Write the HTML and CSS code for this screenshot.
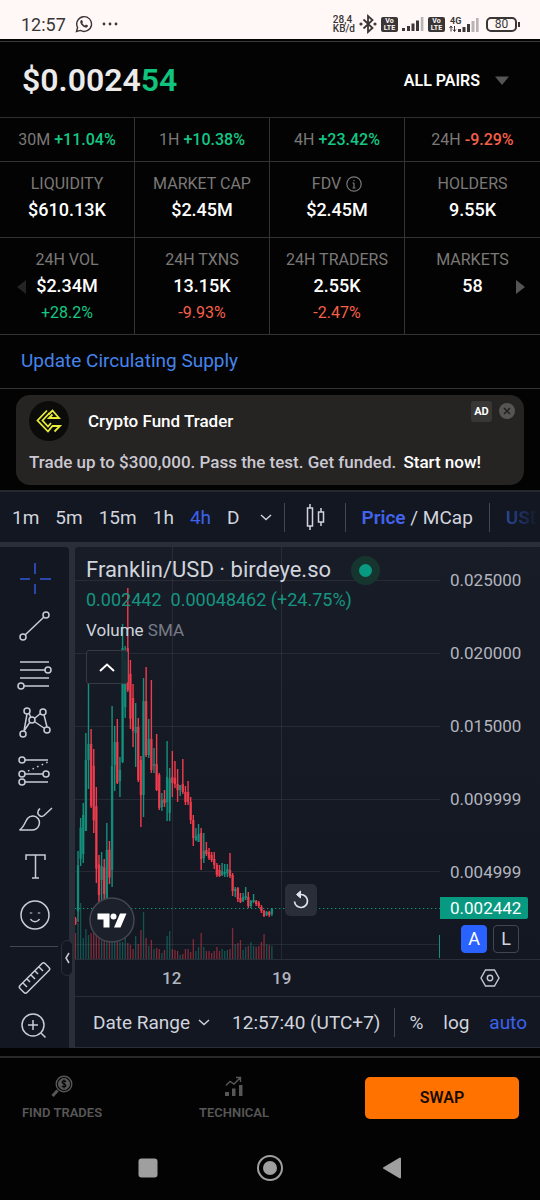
FILE: index.html
```html
<!DOCTYPE html>
<html lang="en">
<head>
<meta charset="utf-8">
<meta name="viewport" content="width=device-width, initial-scale=1">
<title>Franklin / USD</title>
<link rel="stylesheet" href="styles.css">
</head>
<body>
<header class="status">
  <div class="status-left">
    <span class="clock">12:57</span>
    <svg width="18" height="18" viewBox="0 0 18 18" fill="none" stroke="#3b3636" stroke-width="1.4"><path d="M1.5 16.5l1.1-4A7.4 7.4 0 1 1 5.4 15.400z"/><path d="M6 5.200l1-.3 1 2-.7 1c.7 1.400 1.500 2 2.800 2.600l.9-.9 2 1-.2 1c-.5 1-1.600 1.200-2.600.9C7.800 11.700 6 10 5.300 7.600 5.100 6.700 5.400 5.600 6 5.200z" fill="#3b3636" stroke="none"/></svg>
    <svg width="16" height="4" viewBox="0 0 16 4" fill="#3b3636"><circle cx="2" cy="2" r="1.400"/><circle cx="8" cy="2" r="1.400"/><circle cx="14" cy="2" r="1.400"/></svg>
  </div>
  <div class="status-right">
    <span class="tiny">28,4<br>KB/d</span>
    <svg width="18" height="20" viewBox="0 0 18 20" fill="none" stroke="#3b3636" stroke-width="1.800"><path d="M4.500 5.500l9 8.500L9 18V2l4.500 4-9 8.500"/><circle cx="2" cy="10" r=".7"/><circle cx="16" cy="10" r=".7"/></svg>
    <span class="volte">Vo<br>LTE</span>
    <svg width="22" height="16" viewBox="0 0 22 16" fill="#3b3636"><path d="M0 12h3v3H0zM5 10h3v5H5zM9.500 7.500h3V15h-3zM14 4.500h3V15h-3z"/><path d="M18.800 1h2.600v14h-2.600z" fill="#b9b3b3"/></svg>
    <span class="volte">Vo<br>LTE</span>
    <svg width="31" height="17" viewBox="0 0 31 17" fill="#3b3636"><text x="1" y="8" class="net">4G</text><path d="M2 10v5.500M0.500 12l1.500-2 1.500 2M5.500 10v5.500M4 13.500l1.500 2 1.500-2" fill="none" stroke="#3b3636"/><path d="M9 13h3v3H9zM13.500 11h3v5h-3zM18 8h3v8h-3z"/><path d="M22.500 5h3v11h-3zM27 2h2.600v14H27z" fill="#b9b3b3"/></svg>
    <span class="battery">80</span>
  </div>
</header>

<main>
  <section class="price-bar">
    <h1 class="price">$0.0024<span class="up">54</span></h1>
    <button class="pairs">ALL PAIRS <svg width="14" height="9" viewBox="0 0 14 9"><path d="M0 .5h14L7 9z" fill="#555"/></svg></button>
  </section>

  <section class="changes">
    <div>30M <b class="up">+11.04%</b></div>
    <div>1H <b class="up">+10.38%</b></div>
    <div>4H <b class="up">+23.42%</b></div>
    <div>24H <b class="down">-9.29%</b></div>
  </section>
  <section class="stats stats-short">
    <div><span>LIQUIDITY</span><strong>$610.13K</strong></div>
    <div><span>MARKET CAP</span><strong>$2.45M</strong></div>
    <div><span>FDV <svg width="16" height="16" viewBox="0 0 16 16" fill="none" stroke="#7b7977" stroke-width="1.200"><circle cx="8" cy="8" r="7.200"/><path d="M8 7v5M6.500 7H8M6.500 12h3M8 4v1.300"/></svg></span><strong>$2.45M</strong></div>
    <div><span>HOLDERS</span><strong>9.55K</strong></div>
  </section>
  <section class="stats stats-tall">
    <div><span>24H VOL</span><strong>$2.34M</strong><em class="up">+28.2%</em></div>
    <div><span>24H TXNS</span><strong>13.15K</strong><em class="down">-9.93%</em></div>
    <div><span>24H TRADERS</span><strong>2.55K</strong><em class="down">-2.47%</em></div>
    <div><span>MARKETS</span><strong>58</strong></div>
    <button class="page prev" aria-label="Previous"><svg width="9" height="14" viewBox="0 0 9 14"><path d="M9 0v14L0 7z" fill="#242424"/></svg></button>
    <button class="page next" aria-label="Next"><svg width="9" height="14" viewBox="0 0 9 14"><path d="M0 0v14l9-7z" fill="#555"/></svg></button>
  </section>
  <div class="update"><a href="#">Update Circulating Supply</a></div>

  <aside class="ad">
    <div class="ad-top">
      <svg class="ad-logo" width="40" height="40" viewBox="0 0 40 40"><circle cx="20" cy="20" r="20" fill="#0b0b0a"/><g fill="none" stroke="#e9ec36" stroke-width="1.800"><path d="M18 9.500L8.500 19.500 19 30.500l4.500-5.500h7.500l-5.500 5.500"/><path d="M20.500 12L13.500 19.500l5.500 6 3-3.500"/><path d="M19.500 13.500l4-4 6.500 7.500h-10l3.500-3.500"/></g></svg>
      <h2>Crypto Fund Trader</h2>
      <span class="ad-tag">AD</span>
      <button class="ad-close" aria-label="Close"><svg width="16" height="16" viewBox="0 0 16 16"><circle cx="8" cy="8" r="8" fill="#565553"/><path d="M5 5l6 6M11 5l-6 6" stroke="#22201f" stroke-width="1.500"/></svg></button>
    </div>
    <p>Trade up to $300,000. Pass the test. Get funded. <a href="#">Start now!</a></p>
  </aside>

  <section class="tv">
    <nav class="toolbar">
      <button>1m</button><button>5m</button><button>15m</button><button>1h</button><button class="on">4h</button><button>D</button>
      <button class="more" aria-label="More intervals"><svg width="12" height="7" viewBox="0 0 12 7" fill="none" stroke="#d1d4dc" stroke-width="1.400"><path d="M1 1l5 4.500L11 1"/></svg></button>
      <i></i>
      <button class="candle" aria-label="Chart type"><svg width="22" height="28" viewBox="0 0 22 28" fill="none" stroke="#d1d4dc" stroke-width="1.500"><path d="M2.500 5h5v18h-5zM5 1v4M5 23v4M13.500 9h5v10h-5zM16 5v4M16 19v4"/></svg></button>
      <i></i>
      <button class="mode"><b>Price</b> / MCap</button>
      <i></i>
      <button class="usd">USD</button>
    </nav>
    <div class="tv-body">
      <nav class="tools">
        <button aria-label="Cross"><svg class="blue" viewBox="0 0 48 48"><path d="M9 24h10M29 24h11M24 8v11M24 29v10"/></svg></button>
        <button aria-label="Trend line"><svg viewBox="0 0 48 48"><path d="M14 32L33 14"/><circle cx="12" cy="34" r="3"/><circle cx="35" cy="12" r="3"/></svg></button>
        <button aria-label="Fib retracement"><svg viewBox="0 0 48 48"><path d="M9 11h29M9 19h25M9 27h29M13 35h25"/><circle cx="37" cy="19" r="3"/><circle cx="10" cy="35" r="3"/></svg></button>
        <button aria-label="Patterns"><svg viewBox="0 0 48 48"><path d="M16 15l-3 17M18 14l2 5M19 23l-6 9M24 19l6-5M24 23l9 6M33 16l3 12"/><circle cx="16" cy="12" r="3"/><circle cx="32" cy="13" r="3"/><circle cx="21" cy="21" r="3"/><circle cx="12" cy="35" r="3"/><circle cx="36" cy="31" r="3"/></svg></button>
        <button aria-label="Forecasting"><svg viewBox="0 0 48 48"><path d="M14 13h23M14 27h18M14 35h23"/><path d="M17 24l20-9" stroke-dasharray="1.500 3.500"/><circle cx="11" cy="13" r="3"/><circle cx="11" cy="27" r="3"/><circle cx="35" cy="27" r="3"/><circle cx="11" cy="35" r="3"/></svg></button>
        <button aria-label="Brush"><svg viewBox="0 0 48 48"><path d="M8.500 35c4-2 5-7 8-11.500 3-3.500 8-3 10.500 0 3 4 1 11.500-6 11.500zM41 13l-8 7.500c-3 2.500-7-1-6-4 .3-1.500 1-2 2-3"/></svg></button>
        <button aria-label="Text"><svg viewBox="0 0 48 48"><path d="M15 17v-5h19v5M24.500 12v23M21 35h7"/></svg></button>
        <button aria-label="Icons"><svg viewBox="0 0 48 48"><circle cx="24" cy="24" r="14"/><path d="M19.500 28c2 3.500 7 3.500 9 0"/><path d="M20 21.500v1M28 21.500v1" stroke-width="2.500"/></svg></button>
        <hr>
        <button aria-label="Measure"><svg viewBox="0 0 48 48"><path d="M9 31.500L31 9.500q1.500-1.500 3 0l4 4q1.500 1.500 0 3L16 38.500q-1.500 1.500-3 0l-4-4q-1.500-1.500 0-3zM12 29l4 4M16 25l3 3M20 21l4 4M24 17l3 3M28 13l4 4"/></svg></button>
        <button class="zoom" aria-label="Zoom in"><svg viewBox="0 0 48 48"><circle cx="22" cy="24" r="11"/><path d="M30 32l4.500 4.500M17 24h10M22 19v10"/></svg></button>
        <button class="handle" aria-label="Hide toolbar"><svg width="5" height="12" viewBox="0 0 5 12" fill="none" stroke="#d1d4dc" stroke-width="1.300"><path d="M4 1L1 6l3 5"/></svg></button>
      </nav>
      <div class="chart">
        <div class="pane">
          <div class="plot">
            <svg id="canvas" viewBox="75 547 365 412" preserveAspectRatio="none"></svg>
            <div class="legend">
              <h3>Franklin/USD · birdeye.so <span class="dot"></span></h3>
              <p class="ohlc"><span>0.002442</span><span>0.00048462 (+24.75%)</span></p>
              <p class="vol">Volume <span>SMA</span></p>
              <button class="collapse" aria-label="Collapse legend"><svg width="16" height="9" viewBox="0 0 16 9" fill="none" stroke="#fff" stroke-width="2"><path d="M1 8l7-6.500L15 8"/></svg></button>
            </div>
            <svg class="tv-logo" width="46" height="46" viewBox="0 0 46 46"><circle cx="23" cy="23" r="22" fill="#1c202b" stroke="#434651" stroke-width="1.500"/><path d="M8.500 16.500h12v14h-6v-8h-6zM31 16.500h6.500l-6 14H25z" fill="#fff"/><circle cx="24.500" cy="19.500" r="3" fill="#fff"/></svg>
            <button class="reset" aria-label="Reset chart"><svg width="18" height="20" viewBox="0 0 18 20" fill="none" stroke="#e0e3eb" stroke-width="1.700"><path d="M2.500 11.500a6.500 6.500 0 1 0 6.500-7H5.500"/><path d="M8.500 1L4.500 4.500l4 3.500z" fill="#e0e3eb" stroke-width="1"/></svg></button>
          </div>
          <div class="axis">
            <span>0.025000</span><span>0.020000</span><span>0.015000</span><span>0.009999</span><span>0.004999</span>
            <strong>0.002442</strong>
            <div class="scale"><button class="auto-scale">A</button><button>L</button></div>
          </div>
        </div>
        <div class="time"><span>12</span><span>19</span>
          <svg width="20" height="18" viewBox="0 0 20 18" fill="none" stroke="#c4c7d0" stroke-width="1.400"><path d="M5.500 1h9l4.500 8-4.500 8h-9L1 9z"/><circle cx="10" cy="9" r="2.700"/></svg>
        </div>
        <div class="range">
          <button class="date">Date Range <svg width="12" height="7" viewBox="0 0 12 7" fill="none" stroke="#d1d4dc" stroke-width="1.400"><path d="M1 1l5 4.500L11 1"/></svg></button>
          <button class="zone">12:57:40 (UTC+7)</button>
          <i></i>
          <div class="modes"><button>%</button><button>log</button><button class="on">auto</button></div>
        </div>
      </div>
    </div>
  </section>
</main>

<footer class="actions">
  <button class="tab"><svg width="22" height="23" viewBox="0 0 22 23" fill="none" stroke="#575757"><circle cx="13" cy="9" r="7.800" stroke-width="1.400"/><circle cx="13" cy="9" r="5.500" fill="#575757"/><path d="M6.500 15.500L1.500 21" stroke-width="3"/><path d="M15 7c-.5-1.500-4-1.500-4 .3 0 2 4 1.200 4 3.200 0 1.800-3.500 1.800-4.200.2M13 4.500v9" stroke="#050505" stroke-width="1.100"/></svg>FIND TRADES</button>
  <button class="tab tech"><svg width="20" height="23" viewBox="0 0 20 23" fill="#575757"><path d="M1 17h4v4H1zM8 13.500h3.500V21H8zM15 10h3.500v11H15z"/><path d="M2 10.500l4-4 4 2.500 6-6M12 2.500h4.500V7" fill="none" stroke="#575757" stroke-width="1.400"/></svg>TECHNICAL</button>
  <button class="swap">SWAP</button>
</footer>
<nav class="system">
  <button aria-label="Recent apps"><svg width="28" height="28" viewBox="0 0 28 28"><rect x="4.500" y="4.500" width="19" height="19" rx="3" fill="#9f9f9f"/></svg></button>
  <button aria-label="Home"><svg width="28" height="28" viewBox="0 0 28 28"><circle cx="14" cy="14" r="12" fill="none" stroke="#9f9f9f" stroke-width="2"/><circle cx="14" cy="14" r="7" fill="#9f9f9f"/></svg></button>
  <button aria-label="Back"><svg width="28" height="28" viewBox="0 0 28 28"><path d="M22 4.500v19L6 14z" fill="#9f9f9f" stroke="#9f9f9f" stroke-width="2" stroke-linejoin="round"/></svg></button>
</nav>
<script src="chart.js"></script>
</body>
</html>
```
FILE: chart.js
```js
// Each candle: colour, wick top, wick bottom, volume top, optional body top and bottom.
const candles = `
r 917 925 933;g 851 922 923;g 818 866 903;g 803 863 938;g 733 831 929 760 831;g 683 789 935 744 760;r 729 808 933 744 806;r 749 833 913;r 787 883 905;r 855 902 920
g 852 900 925 866 880;r 859 900 930;g 823 900 920 850 900;r 841 884 935;g 706 887 930 766 870;g 726 791 940 742 765;r 719 784 938 742 783;g 757 797 942 770 781;g 624 763 942 648 762;g 646 718 938
r 588 692 943 648 690;r 660 729 945;r 684 747 949 698 731;g 703 767 936 727 733;r 718 782 944 727 780;r 756 827 930 760 795;g 678 817 912 701 795;r 667 757 938 701 755;g 719 758 946 739 755;r 680 773 940 739 770
g 748 773 949 764 766;r 734 791 948 764 790;r 773 810 949 775 808;g 793 811 953 800 807;r 790 807 950 799 803;g 741 821 936 777 802;g 768 821 931;r 751 797 949 777 783;r 761 788 950 778 784;r 769 802 951 784 790
g 785 796 955 785 790;r 759 794 954 784 792;r 786 805 949 792 802;r 781 805 949 792 802;r 797 824 952 802 820;r 815 846 939 820 838;g 828 841 951 836 840;g 824 842 947 834 842;r 828 870 933 833 859;g 833 863 947 851 858
r 842 856 951 850 854;r 848 860 951 852 858;r 852 862 953 855 860;r 852 869 951 859 865;r 863 877 947 865 875;r 865 877 951 870 876;g 863 876 949 871 875;g 864 877 951 872 874;g 864 877 950 869 873;r 853 878 949 870 876
r 873 896 928 875 891;g 887 897 944 889 891;r 887 902 943 888 899;r 893 903 940 898 902;g 893 902 950 897 901;g 887 900 947 896 898;r 892 908 946 897 906;g 900 908 942 901 906;g 894 903 946 900 902;r 900 906 947 901 904
r 901 908 946 903 906;r 905 913 942 907 911;r 910 917 934 911 916;g 911 916 944 912 915;r 911 917 945 912 915;g 908 916 946 909 914`
  .trim().split(/[;\n]/).map(row => row.trim().split(' '));

const colour = { g: '#14917d', r: '#f23c4e' };
const bar = (x, top, bottom, width, fill, opacity) =>
  `<rect x="${(x - width / 2).toFixed(2)}" y="${top}" width="${width}" height="${bottom - top}" fill="${fill}" fill-opacity="${opacity}"/>`;

let out = '<g fill="#f0f3fa" fill-opacity=".08">';
[580, 653, 726, 799, 871, 944].forEach(y => { out += `<rect x="75" y="${y}" width="365" height="1"/>`; });
[172, 281].forEach(x => { out += `<rect x="${x}" y="547" width="1" height="412"/>`; });
out += '</g><path d="M75 908.500H440" stroke="#089981" stroke-width="1.200" stroke-dasharray="1.300 2.700"/>';

candles.forEach(([c, high, low, vol, open, close], i) => {
  const x = 75.4 + i * 2.62;
  const fill = colour[c];
  const span = low - high;
  out += bar(x, +vol, 959, 1.3, fill, 0.5);
  out += bar(x, +high, +low, 1.4, fill, 1);
  out += bar(x, open ? +open : +high + span * 0.2, close ? +close : +high + span * 0.85, 2.4, fill, 0.85);
});
out += bar(439.5, 935, 958, 1, colour.g, 1);
document.getElementById('canvas').innerHTML = out;
```
FILE: styles.css
```css
* { box-sizing: border-box; }
body { margin: 0; background: #030303; color: #fff; font-family: Roboto, "Noto Sans", sans-serif; }
h1, h2, h3, p { margin: 0; }
button { margin: 0; padding: 0; border: 0; background: none; color: inherit; font: inherit; white-space: nowrap; }
a { text-decoration: none; }
svg { display: block; flex: none; }
.up { color: #15c784; }
.down { color: #f6604a; }

.status { display: flex; justify-content: space-between; height: 39px; padding: 9px 20px 0 21px; background: #fff8f6; color: #3b3636; }
.status-left, .status-right { display: flex; align-items: center; height: 30px; }
.status-left { gap: 9px; }
.clock { font-size: 18px; }
.status-right { gap: 4px; }
.tiny { font-size: 10px; line-height: 9px; font-weight: 500; }
.volte { width: 17px; height: 15px; padding: 1px; border-radius: 2px; background: #3b3636; color: #fff8f6; font-size: 7px; line-height: 7px; font-weight: 700; text-align: center; }
.net { font: 700 9px Roboto, sans-serif; }
.battery { position: relative; width: 31px; height: 15px; margin: 0 3px 0 2px; border: 2px solid #3b3636; border-radius: 5px; font-size: 12px; line-height: 11px; font-weight: 400; text-align: center; }
.battery::after { content: ""; position: absolute; right: -5px; top: 3px; width: 2px; height: 5px; background: #3b3636; }

.price-bar { display: flex; justify-content: space-between; align-items: center; height: 79px; padding: 4px 31px 0 22px; border-bottom: 1px solid #2e2e2e; background: linear-gradient(#030303 2px, #383838 2px, #383838 3px, #030303 3px); }
.price { font-size: 32px; line-height: 38px; font-weight: 600; color: #eceaea; }
.price .up { color: #10c47d; }
.pairs { display: flex; align-items: center; gap: 15px; font-size: 16px; font-weight: 600; }

.changes, .stats { display: grid; grid-template-columns: repeat(4, 1fr); border-bottom: 1px solid #333; }
.changes > div, .stats > div { border-right: 1px solid #333; text-align: center; white-space: nowrap; }
.changes > div:nth-child(4), .stats > div:nth-child(4) { border-right: 0; }
.changes { height: 44px; line-height: 43px; font-size: 16px; color: #7b7977; }
.changes b { font-weight: 500; }
.stats { position: relative; }
.stats > div { display: flex; flex-direction: column; align-items: center; padding-top: 11px; }
.stats-short { height: 76px; }
.stats-tall { height: 97px; }
.stats span { display: flex; align-items: center; gap: 5px; color: #7b7977; font-size: 16px; line-height: 22px; }
.stats strong { font-size: 18px; line-height: 30px; font-weight: 500; }
.stats em { font-size: 16px; line-height: 24px; font-style: normal; }
.page { position: absolute; top: 42px; }
.prev { left: 17px; }
.next { right: 15px; }
.update { height: 54px; padding-left: 21px; border-bottom: 1px solid #333; line-height: 52px; font-size: 19px; }
.update a { color: #4583ed; }

.ad { margin: 6px 16px 5px; height: 90px; padding: 6px 9px 0 13px; border-radius: 14px; background: #252422; }
.ad-top { display: flex; align-items: flex-start; }
.ad-top h2 { flex: 1; margin-left: 19px; font-size: 17px; line-height: 40px; font-weight: 500; }
.ad-tag { width: 21px; height: 21px; border-radius: 3px; background: #383735; font-size: 11px; line-height: 21px; font-weight: 700; text-align: center; }
.ad-close { margin: 2px 0 0 7px; }
.ad p { font-size: 17px; line-height: 42px; font-weight: 500; color: #cbc8d2; white-space: nowrap; }
.ad a { margin-left: 3px; color: #fff; }

.tv { border-top: 2px solid #262930; background: #2a2e39; color: #d1d4dc; }
.tv i { flex: none; width: 1px; height: 29px; background: #434651; }
.tv .on { color: #3d62ee; }
.toolbar { display: flex; align-items: center; gap: 16px; height: 50px; padding-left: 12px; overflow: hidden; background: #131722; font-size: 19px; }
.toolbar button { flex: none; }
.toolbar .more { margin: 0 -4px 0 4px; }
.toolbar .candle { margin: 0 2px 0 4px; }
.toolbar .mode b { color: #4263eb; font-weight: 600; }
.toolbar .usd { font-weight: 600; color: #2a4699; -webkit-mask-image: linear-gradient(90deg, #000, transparent 90%); mask-image: linear-gradient(90deg, #000, transparent 90%); }
.tv-body { display: flex; gap: 6px; padding-top: 5px; }
.tools { position: relative; display: flex; flex-direction: column; width: 69px; padding-top: 8px; border-top-right-radius: 4px; background: #131722; }
.tools button { display: flex; justify-content: center; height: 48px; }
.tools svg { width: 48px; height: 48px; fill: none; stroke: #c9ccd5; stroke-width: 1.5; }
.tools .blue { stroke: #3358dd; }
.tools .zoom { height: 46px; align-items: center; }
.tools hr { width: 48px; height: 1px; margin: 7px 0 7px 10px; border: 0; background: #434651; }
.tools .handle { position: absolute; left: 61px; top: 393px; width: 12px; height: 36px; align-items: center; border: 1px solid #2a2e39; border-radius: 6px; background: #131722; z-index: 1; }
.tools .handle svg { width: 5px; height: 12px; }

.chart { flex: 1; min-width: 0; background: #131722; border-top-left-radius: 4px; }
.pane { display: flex; height: 413px; border-bottom: 1px solid #2a2e39; background: linear-gradient(#181c27, #131722); border-top-left-radius: 4px; }
.plot { position: relative; flex: 1; min-width: 0; }
#canvas { width: 100%; height: 412px; }
.legend { position: absolute; left: 11px; top: 8px; white-space: nowrap; }
.legend h3 { display: flex; align-items: center; gap: 20px; font-size: 22px; line-height: 30px; font-weight: 400; }
.dot { width: 29px; height: 29px; border: 8px solid #17352f; border-radius: 50%; background: #089981; }
.legend p { line-height: 30px; }
.ohlc { display: flex; gap: 9px; color: #159580; font-size: 18px; }
.vol { font-size: 17px; }
.vol span { color: #787b86; }
.collapse { display: flex; align-items: center; justify-content: center; width: 42px; height: 34px; margin-top: 5px; border: 1px solid #363a45; border-radius: 3px; background: rgba(23, 27, 38, .8); }
.tv-logo { position: absolute; left: 14px; bottom: 16px; }
.reset { position: absolute; left: 210px; bottom: 43px; display: flex; align-items: center; justify-content: center; width: 32px; height: 32px; border-radius: 5px; background: #2a2e39; }
.axis { display: flex; flex-direction: column; width: 100px; padding-top: 22px; font-size: 17px; line-height: 22px; color: #b2b5be; }
.axis > span { height: 22px; margin: 0 0 51px 10px; }
.axis > span:nth-child(5) { margin-bottom: 14px; }
.axis strong { width: 88px; padding-left: 10px; border-radius: 0 2px 2px 0; background: #089981; color: #fff; font-weight: 400; }
.scale { display: flex; gap: 6px; margin: 6px 0 0 21px; }
.scale button { width: 26px; height: 28px; border: 1px solid #434651; border-radius: 4px; color: #d1d4dc; font-size: 18px; }
.scale .auto-scale { border-color: #2962ff; background: #2962ff; color: #fff; }
.time { display: flex; align-items: center; height: 37px; padding: 0 40px 0 87px; border-bottom: 1px solid #2a2e39; font-size: 17px; font-weight: 500; color: #b2b5be; }
.time span { width: 20px; margin-right: 90px; }
.time svg { margin-left: auto; }
.range { display: flex; align-items: center; height: 51px; padding: 0 13px 0 18px; font-size: 19px; border-bottom: 1px solid #2a2e39; }
.date { display: flex; align-items: center; gap: 8px; margin-right: 22px; }
.range i { margin: 0 14px; }
.modes { flex: 1; display: flex; justify-content: space-between; }

.actions { display: flex; align-items: center; height: 84px; margin-top: 8px; padding: 0 21px 3px; border-top: 2px solid #28282a; }
.tab { display: flex; flex-direction: column; align-items: center; gap: 7px; width: 82px; color: #575757; font-size: 13px; line-height: 15px; font-weight: 600; }
.tech { margin-left: 90px; }
.swap { flex: 1; max-width: 154px; height: 42px; margin-left: auto; border-radius: 5px; background: #ff7200; color: #160c06; font-size: 16px; font-weight: 600; }
.system { display: flex; justify-content: center; gap: 94px; padding-top: 14px; }
```
